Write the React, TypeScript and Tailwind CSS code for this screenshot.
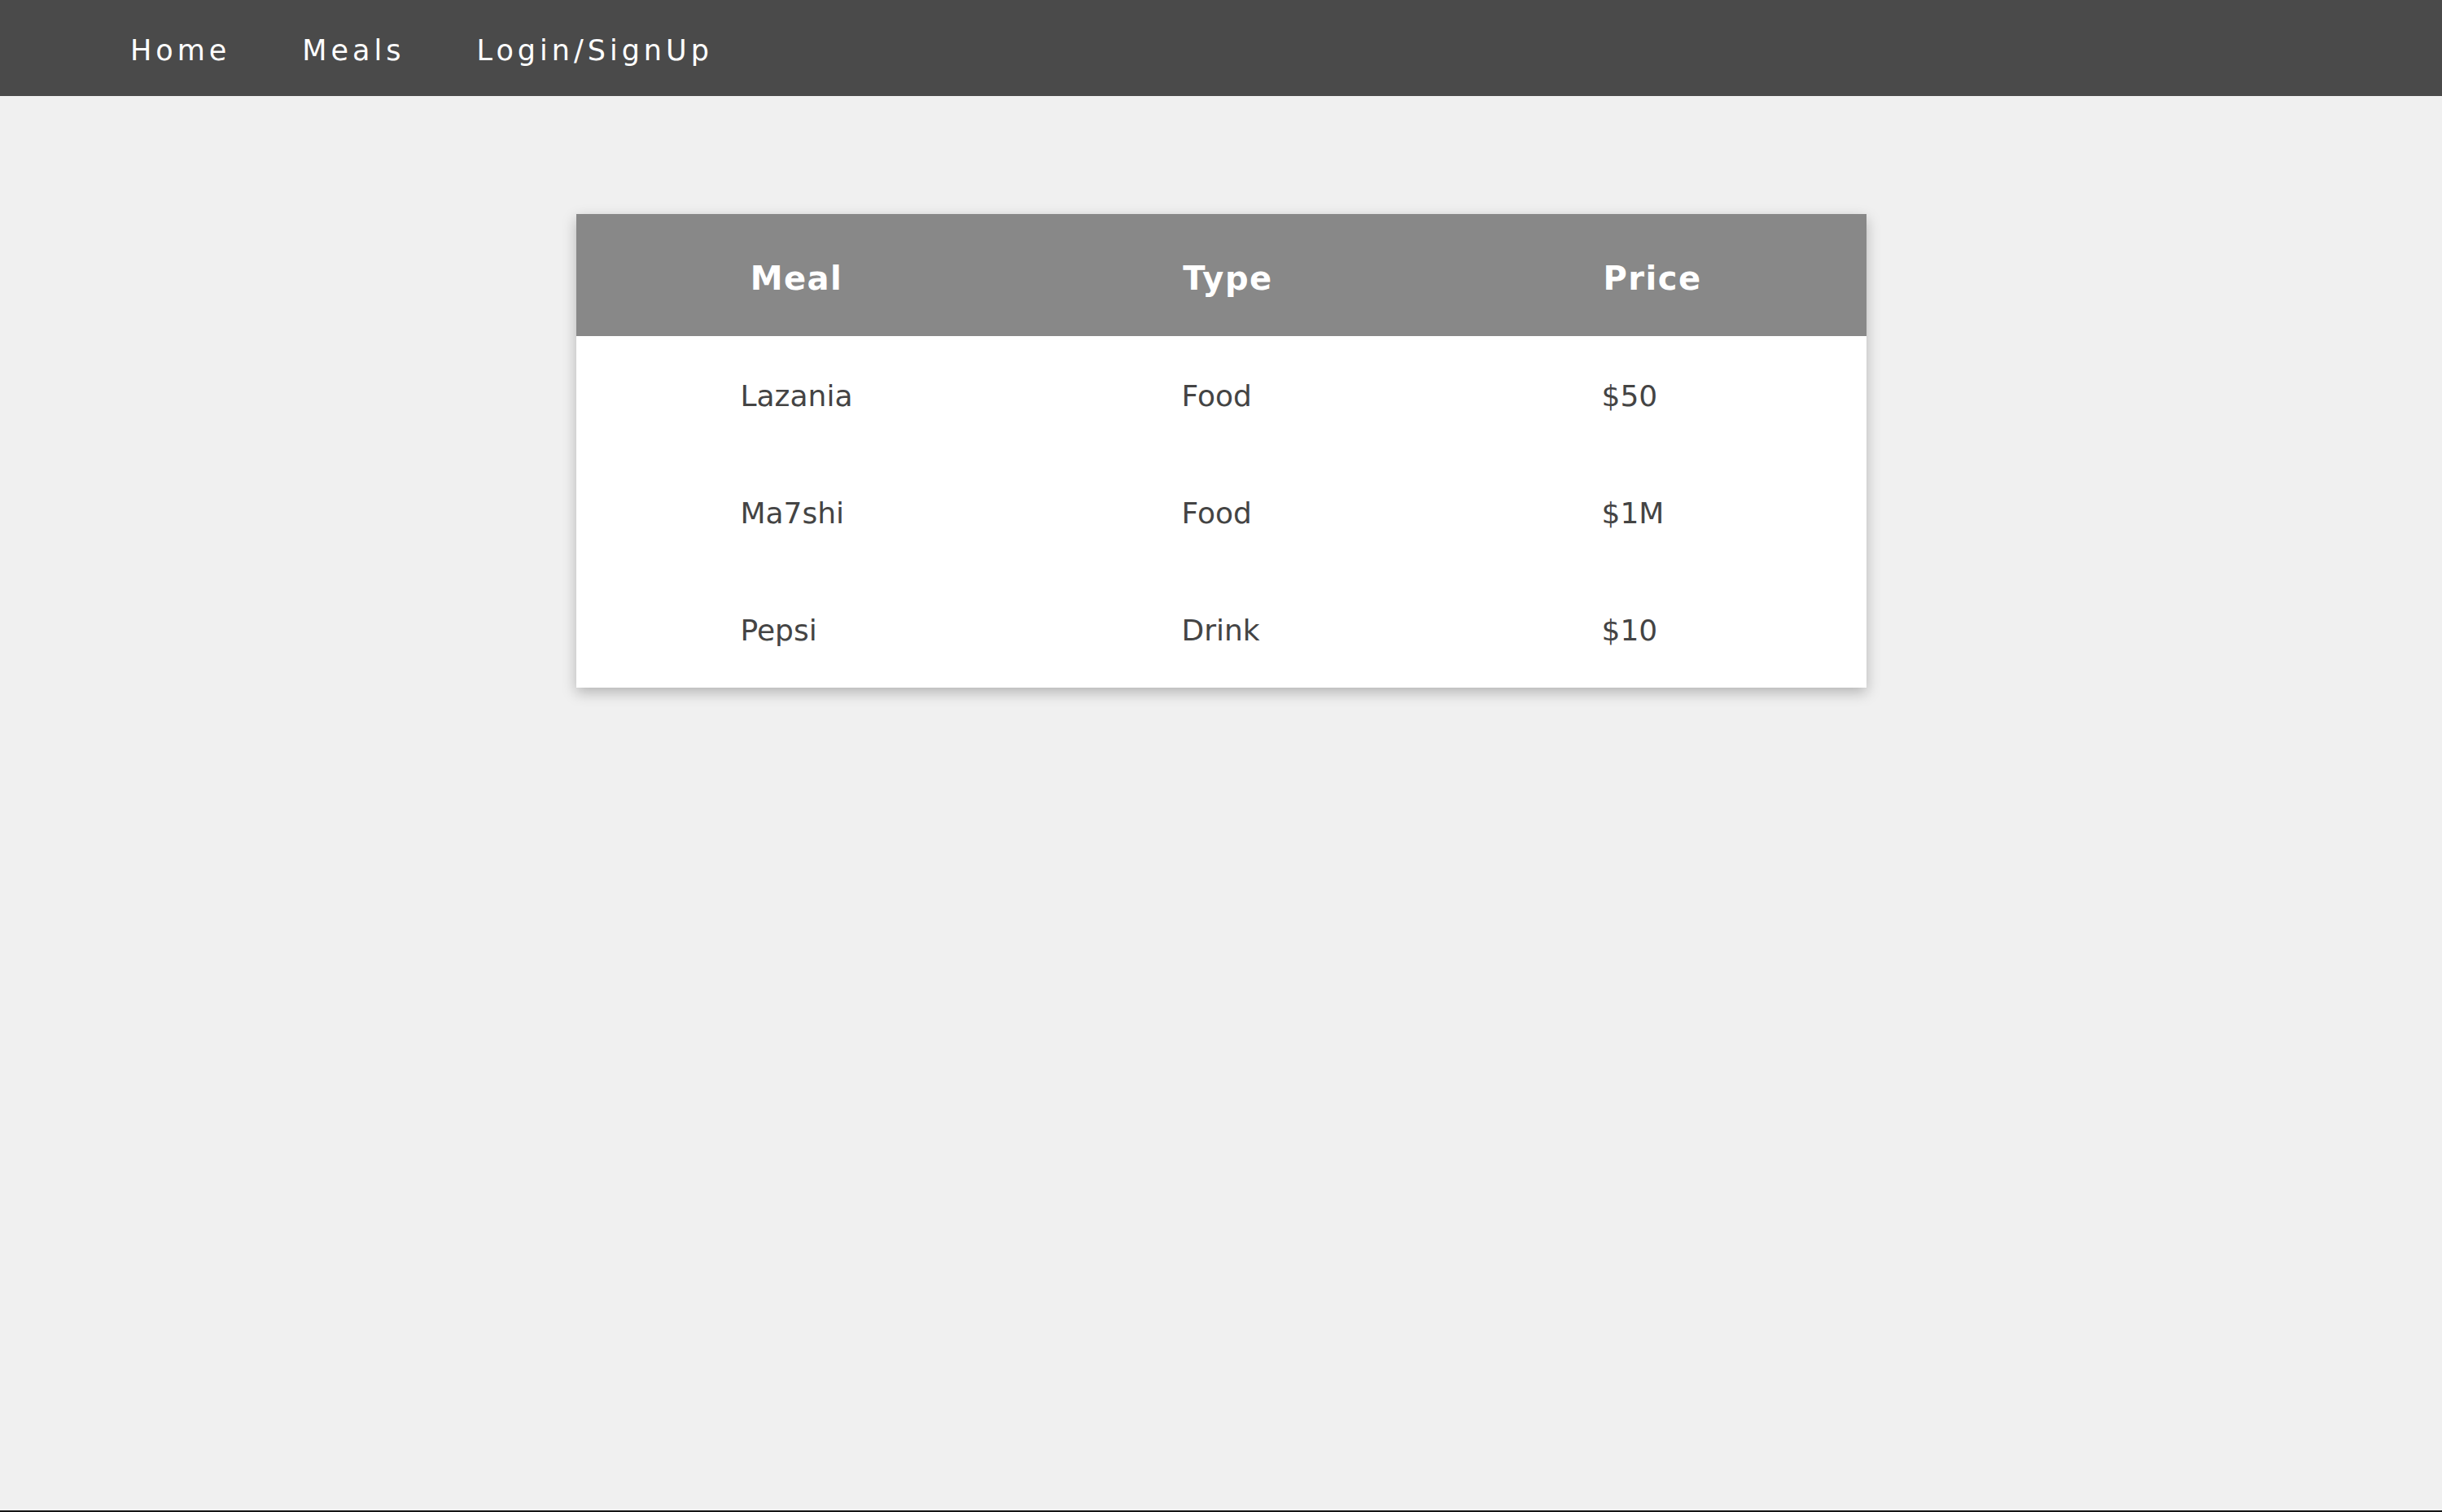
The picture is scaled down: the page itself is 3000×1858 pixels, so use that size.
const meals = [
  { name: 'Lazania', type: 'Food', price: '$50' },
  { name: 'Ma7shi', type: 'Food', price: '$1M' },
  { name: 'Pepsi', type: 'Drink', price: '$10' },
];

function NavBar() {
  return (
    <nav className="flex h-[118px] items-center gap-[88px] bg-[#4a4a4a] pl-[160px] pt-[7px]">
      <a className="text-[35px] tracking-[5px] text-white">Home</a>
      <a className="text-[35px] tracking-[5px] text-white">Meals</a>
      <a className="text-[35px] tracking-[5px] text-white">Login/SignUp</a>
    </nav>
  );
}

export default function App() {
  return (
    <div
      className="flex min-h-screen flex-col bg-[#f0f0f0]"
      style={{ fontFamily: 'Verdana, "DejaVu Sans", sans-serif' }}
    >
      <NavBar />

      <main className="flex flex-1 justify-center pt-[145px]">
        <div className="h-fit w-[1585px] bg-white shadow-[0_6px_16px_rgba(0,0,0,0.25)]">
          <table className="w-full table-fixed border-collapse">
            <colgroup>
              <col className="w-[542px]" />
              <col className="w-[518px]" />
              <col className="w-[525px]" />
            </colgroup>
            <thead>
              <tr className="h-[150px] bg-[#888888]">
                <th className="pt-[7px] text-center text-[40px] font-bold tracking-[1.5px] text-white">Meal</th>
                <th className="pt-[7px] text-center text-[40px] font-bold tracking-[1.5px] text-white">Type</th>
                <th className="pt-[7px] text-center text-[40px] font-bold tracking-[1.5px] text-white">Price</th>
              </tr>
            </thead>
            <tbody>
              {meals.map((m) => (
                <tr key={m.name} className="h-[144px]">
                  <td className="pl-[202px] pt-[4px] text-[36px] text-[#444444]">{m.name}</td>
                  <td className="pl-[202px] pt-[4px] text-[36px] text-[#444444]">{m.type}</td>
                  <td className="pl-[200px] pt-[4px] text-[36px] text-[#444444]">{m.price}</td>
                </tr>
              ))}
            </tbody>
          </table>
        </div>
      </main>

      <div className="h-[2px] bg-[#151515]" />
    </div>
  );
}
